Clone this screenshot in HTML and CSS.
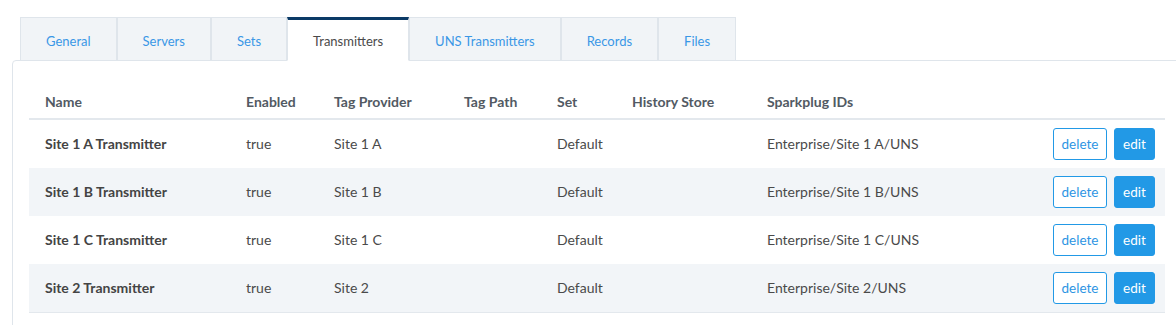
FILE: index.html
```html
<html>
<head>
    <title>Transmitters</title>
    <link rel="stylesheet" href="styles.css">
</head>

<body>
    <div class="page">
        <div class="tabs">
            <div class="tab">General</div>
            <div class="tab">Servers</div>
            <div class="tab">Sets</div>
            <div class="tab tab--active">Transmitters</div>
            <div class="tab">UNS Transmitters</div>
            <div class="tab">Records</div>
            <div class="tab">Files</div>
        </div>
        <div class="panel">
            <table class="grid">
                <colgroup>
                    <col style="width: 201px">
                    <col style="width: 88px">
                    <col style="width: 130px">
                    <col style="width: 93px">
                    <col style="width: 75px">
                    <col style="width: 135px">
                    <col>
                    <col style="width: 160px">
                </colgroup>
                <thead>
                    <tr>
                        <th>Name</th>
                        <th>Enabled</th>
                        <th>Tag Provider</th>
                        <th>Tag Path</th>
                        <th>Set</th>
                        <th>History Store</th>
                        <th colspan="2">Sparkplug IDs</th>
                    </tr>
                </thead>
                <tbody>
                    <tr>
                        <td class="name">Site 1 A Transmitter</td>
                        <td>true</td>
                        <td>Site 1 A</td>
                        <td></td>
                        <td>Default</td>
                        <td></td>
                        <td>Enterprise/Site 1 A/UNS</td>
                        <td class="actions"><span class="btn btn--outline">delete</span><span class="btn">edit</span></td>
                    </tr>
                    <tr>
                        <td class="name">Site 1 B Transmitter</td>
                        <td>true</td>
                        <td>Site 1 B</td>
                        <td></td>
                        <td>Default</td>
                        <td></td>
                        <td>Enterprise/Site 1 B/UNS</td>
                        <td class="actions"><span class="btn btn--outline">delete</span><span class="btn">edit</span></td>
                    </tr>
                    <tr>
                        <td class="name">Site 1 C Transmitter</td>
                        <td>true</td>
                        <td>Site 1 C</td>
                        <td></td>
                        <td>Default</td>
                        <td></td>
                        <td>Enterprise/Site 1 C/UNS</td>
                        <td class="actions"><span class="btn btn--outline">delete</span><span class="btn">edit</span></td>
                    </tr>
                    <tr>
                        <td class="name">Site 2 Transmitter</td>
                        <td>true</td>
                        <td>Site 2</td>
                        <td></td>
                        <td>Default</td>
                        <td></td>
                        <td>Enterprise/Site 2/UNS</td>
                        <td class="actions"><span class="btn btn--outline">delete</span><span class="btn">edit</span></td>
                    </tr>
                </tbody>
            </table>
        </div>
    </div>
</body>
</html>
```

FILE: styles.css
```css
body {
    margin: 0;
    background-color: #fff;
    font-family: Lato, 'Liberation Sans', sans-serif;
    font-size: 13px;
    color: #4a4a4a;
    overflow: hidden;
}

.page {
    padding: 17px 0 0 12px;
}

.tabs {
    display: flex;
    padding-left: 8px;
    position: relative;
    z-index: 1;
}

.tab {
    height: 44px;
    box-sizing: border-box;
    padding: 4px 25px 0;
    display: flex;
    align-items: center;
    background-color: #f1f4f7;
    border: 1px solid #dfe5eb;
    color: #3a97e6;
    font-size: 13px;
}

.tab--active {
    background-color: #fff;
    color: #4a4a4a;
    border-top: 3px solid #0b3a66;
    border-bottom-color: #fff;
    padding-top: 2px;
}

.panel {
    margin-top: -1px;
    margin-right: -6px;
    padding: 20px 16px;
    border: 1px solid #dfe5eb;
    border-radius: 4px 0 0 0;
    height: 260px;
}

.grid {
    width: 100%;
    border-collapse: collapse;
    table-layout: fixed;
    font-size: 14px;
}

.grid th {
    text-align: left;
    font-weight: bold;
    color: #525a63;
    line-height: 20px;
    padding: 11px 16px 6px;
    border-bottom: 2px solid #e3e8ed;
}

.grid td {
    line-height: 20px;
    padding: 14px 16px;
    white-space: nowrap;
}

.grid tbody tr:nth-child(even) {
    background-color: #f2f5f8;
}

.grid tbody tr:last-child {
    border-bottom: 1px solid #e3e8ed;
}

.grid .name {
    font-weight: bold;
    color: #444;
}

.grid .actions {
    padding: 8px 10px 8px 0;
    text-align: right;
}

.btn {
    display: inline-block;
    box-sizing: border-box;
    width: 41px;
    height: 32px;
    line-height: 30px;
    margin-left: 7px;
    text-align: center;
    font-size: 13.5px;
    border: 1px solid #2299e6;
    border-radius: 3px;
    background-color: #2299e6;
    color: #fff;
    vertical-align: middle;
}

.btn--outline {
    width: 54px;
    background-color: #fff;
    color: #2d95e3;
}
```
